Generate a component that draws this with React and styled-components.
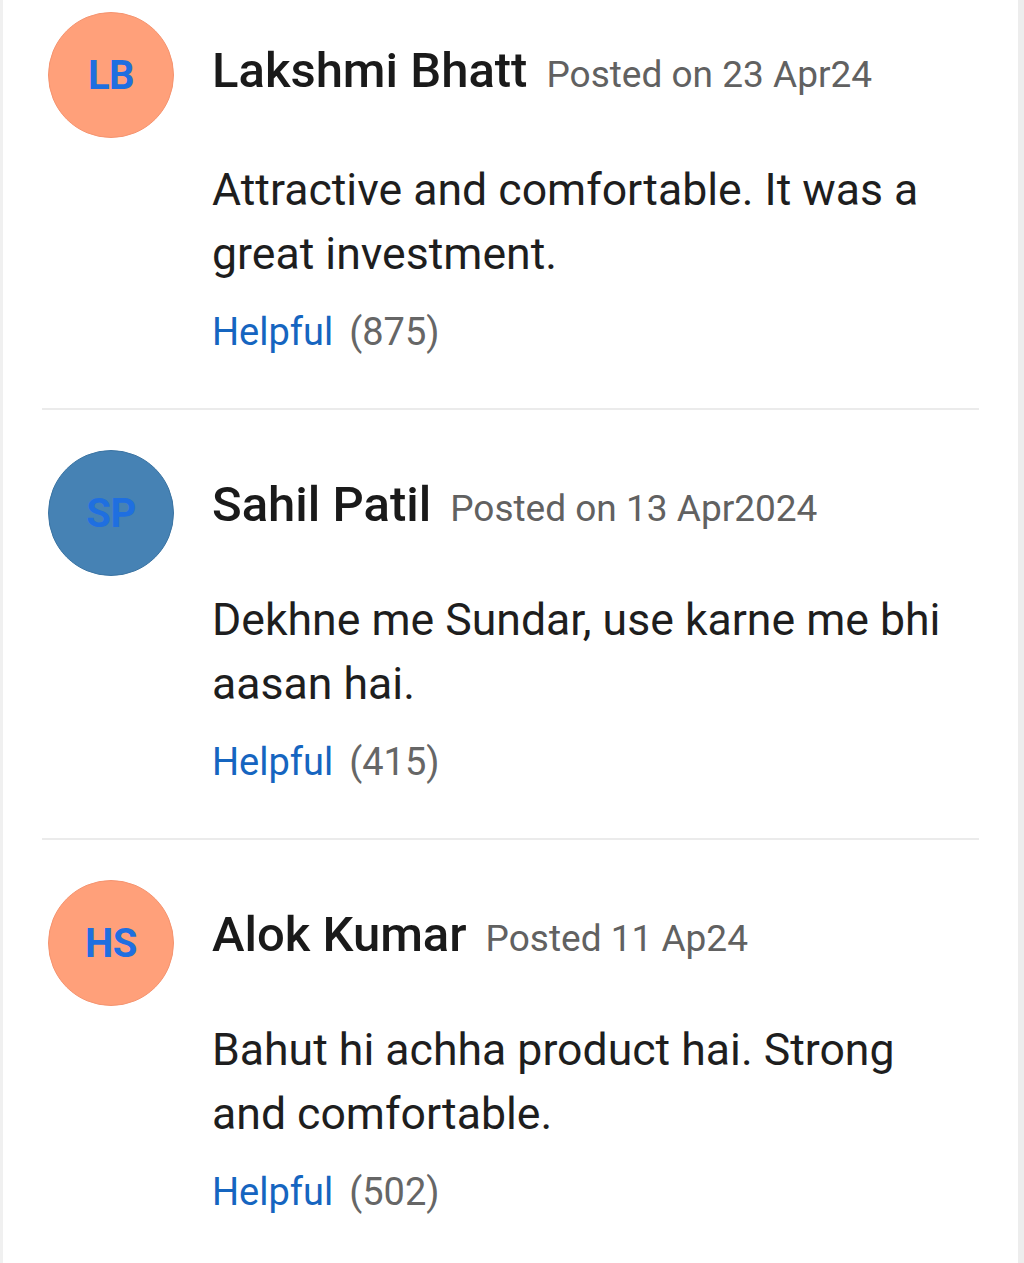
import styled, { createGlobalStyle } from 'styled-components';

const reviews = [
  {
    initials: 'LB',
    tone: 'salmon',
    name: 'Lakshmi Bhatt',
    posted: 'Posted on 23 Apr24',
    text: 'Attractive and comfortable. It was a great investment.',
    helpful: 875,
  },
  {
    initials: 'SP',
    tone: 'steel',
    name: 'Sahil Patil',
    posted: 'Posted on 13 Apr2024',
    text: 'Dekhne me Sundar, use karne me bhi aasan hai.',
    helpful: 415,
  },
  {
    initials: 'HS',
    tone: 'salmon',
    name: 'Alok Kumar',
    posted: 'Posted 11 Ap24',
    text: 'Bahut hi achha product hai. Strong and comfortable.',
    helpful: 502,
  },
];

const GlobalStyle = createGlobalStyle`
  html, body {
    margin: 0;
    padding: 0;
    background: #ffffff;
  }
  body {
    font-family: Roboto, "Noto Sans", "Liberation Sans", sans-serif;
    -webkit-font-smoothing: antialiased;
  }
`;

const App = () => (
  <>
    <GlobalStyle />
    <Page>
      <ReviewList>
        {reviews.map((r) => (
          <Review key={r.name}>
            <Avatar $tone={r.tone}>{r.initials}</Avatar>
            <Content>
              <Header>
                <Name>{r.name}</Name>
                <Posted>{r.posted}</Posted>
              </Header>
              <Body>{r.text}</Body>
              <HelpfulRow>
                <HelpfulLink>Helpful</HelpfulLink>
                <Count>({r.helpful})</Count>
              </HelpfulRow>
            </Content>
          </Review>
        ))}
      </ReviewList>
    </Page>
  </>
);

export default App;

const Page = styled.div`
  min-height: 1263px;
  box-sizing: border-box;
  border-left: 3px solid #f0f0f0;
  border-right: 6px solid #ededed;
  background: #ffffff;
`;

const ReviewList = styled.div`
  padding: 0 39px;
`;

const tones = {
  salmon: { bg: '#ffa07a', border: '#f59470' },
  steel: { bg: '#4682b4', border: '#3b74a3' },
};

const Avatar = styled.div`
  flex: 0 0 126px;
  width: 126px;
  height: 126px;
  box-sizing: border-box;
  border-radius: 50%;
  background: ${(p) => tones[p.$tone].bg};
  border: 1px solid ${(p) => tones[p.$tone].border};
  display: flex;
  align-items: center;
  justify-content: center;
  color: #1f6fe0;
  font-size: 40px;
  font-weight: 700;
  letter-spacing: -0.5px;
`;

const Content = styled.div`
  flex: 1;
  max-width: 752px;
  padding-top: 25px;
`;

const Header = styled.div`
  display: flex;
  align-items: baseline;
  gap: 19px;
  line-height: 60px;
`;

const Name = styled.span`
  font-size: 49px;
  font-weight: 500;
  color: #1a1a1a;
`;

const Posted = styled.span`
  font-size: 37px;
  color: #616161;
`;

const Body = styled.p`
  margin: 49px 0 0;
  font-size: 44.6px;
  line-height: 64px;
  color: #1e1e1e;
`;

const HelpfulRow = styled.div`
  display: flex;
  align-items: baseline;
  gap: 16px;
  margin-top: 20px;
  line-height: 52px;
  font-size: 38px;
`;

const HelpfulLink = styled.span`
  color: #1565c0;
`;

const Count = styled.span`
  color: #666666;
`;

/* the first review sits a little lower beside its avatar */
const Review = styled.div`
  display: flex;
  gap: 38px;
  padding: 40px 0 50px 6px;
  border-bottom: 2px solid #ebebeb;

  &:first-child {
    padding-top: 12px;
  }
  &:first-child ${Content} {
    padding-top: 29px;
  }
  &:first-child ${Body} {
    margin-top: 53px;
  }
  &:last-child {
    border-bottom: none;
  }
`;
